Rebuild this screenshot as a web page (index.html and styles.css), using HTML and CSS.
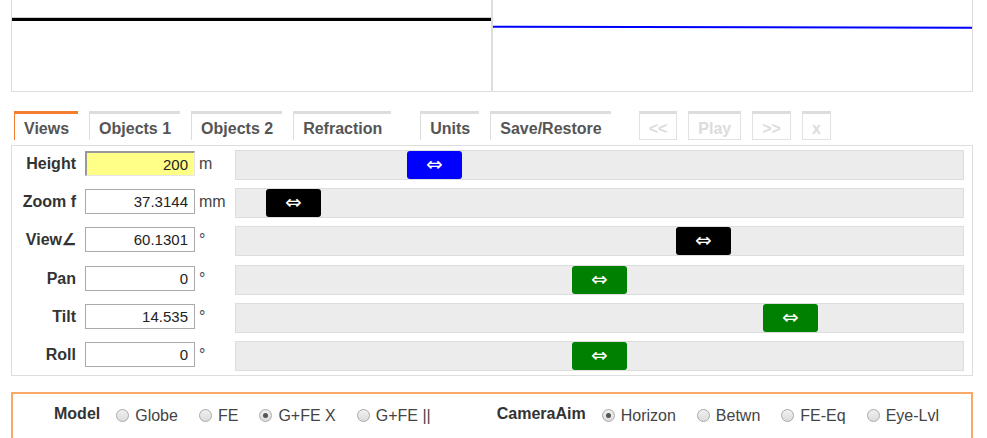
FILE: index.html
```
<!DOCTYPE html>
<html>
	<head>
		<meta charset="utf-8" />
		<title>Globe Views</title>
		<link rel="stylesheet" href="styles.css">
	</head>
	<body>
		<div class="page">
			<div class="graphs">
				<div class="graph graph-left">
					<svg width="479" height="90" viewBox="0 0 479 90">
						<line x1="0" y1="17.5" x2="479" y2="17.5" stroke="#cccccc" stroke-width="1"/>
						<line x1="0" y1="19.5" x2="479" y2="19.5" stroke="#000000" stroke-width="3"/>
					</svg>
				</div>
				<div class="graph graph-right">
					<svg width="480" height="90" viewBox="0 0 480 90">
						<line x1="0" y1="26.8" x2="480" y2="27.8" stroke="#0000ff" stroke-width="2"/>
					</svg>
				</div>
			</div>

			<div class="tabbar">
				<span class="tab on">Views</span>
				<span class="tab">Objects 1</span>
				<span class="tab">Objects 2</span>
				<span class="tab">Refraction</span>
				<span class="tab tab-far">Units</span>
				<span class="tab">Save/Restore</span>
				<span class="btn btn-first">&lt;&lt;</span>
				<span class="btn">Play</span>
				<span class="btn">&gt;&gt;</span>
				<span class="btn">x</span>
			</div>

			<div class="panel">
				<div class="row">
					<label class="name">Height</label>
					<input class="num num-hi" type="text" value="200">
					<span class="unit">m</span>
					<div class="track"><span class="thumb blue" style="left:171px;">&#8660;</span></div>
				</div>
				<div class="row">
					<label class="name">Zoom f</label>
					<input class="num" type="text" value="37.3144">
					<span class="unit">mm</span>
					<div class="track"><span class="thumb black" style="left:30px;">&#8660;</span></div>
				</div>
				<div class="row">
					<label class="name">View&#8736;</label>
					<input class="num" type="text" value="60.1301">
					<span class="unit">&deg;</span>
					<div class="track"><span class="thumb black" style="left:440px;">&#8660;</span></div>
				</div>
				<div class="row">
					<label class="name">Pan</label>
					<input class="num" type="text" value="0">
					<span class="unit">&deg;</span>
					<div class="track"><span class="thumb green" style="left:336px;">&#8660;</span></div>
				</div>
				<div class="row">
					<label class="name">Tilt</label>
					<input class="num" type="text" value="14.535">
					<span class="unit">&deg;</span>
					<div class="track"><span class="thumb green" style="left:527px;">&#8660;</span></div>
				</div>
				<div class="row">
					<label class="name">Roll</label>
					<input class="num" type="text" value="0">
					<span class="unit">&deg;</span>
					<div class="track"><span class="thumb green" style="left:336px;">&#8660;</span></div>
				</div>
			</div>

			<div class="options">
				<div class="group">
					<span class="group-name">Model</span>
					<label class="opt"><input type="radio" name="model">Globe</label>
					<label class="opt"><input type="radio" name="model">FE</label>
					<label class="opt"><input type="radio" name="model" checked>G+FE X</label>
					<label class="opt"><input type="radio" name="model">G+FE ||</label>
				</div>
				<div class="group">
					<span class="group-name">CameraAim</span>
					<label class="opt"><input type="radio" name="aim" checked>Horizon</label>
					<label class="opt"><input type="radio" name="aim">Betwn</label>
					<label class="opt"><input type="radio" name="aim">FE-Eq</label>
					<label class="opt"><input type="radio" name="aim">Eye-Lvl</label>
				</div>
			</div>
		</div>
	</body>
</html>
```
FILE: styles.css
```
*{
	margin:0;
	padding:0;
	box-sizing:border-box;
}
body{
	font-family:"Liberation Sans", Arial, sans-serif;
	font-size:16px;
	color:#333;
	background:#fff;
}
.page{
	width:962px;
	margin-left:11px;
}

/* graphs */
.graphs{
	display:flex;
	height:92px;
}
.graph{
	border:1px solid #ddd;
	border-top:none;
	height:92px;
	overflow:hidden;
}
.graph svg{
	display:block;
}
.graph-left{
	width:481px;
}
.graph-right{
	width:481px;
}

/* tabs */
.tabbar{
	display:flex;
	align-items:flex-start;
	margin-top:19px;
	margin-left:3px;
	height:34px;
}
.tab{
	display:block;
	border-top:3px solid #ddd;
	border-left:1px solid #ddd;
	padding:6px 9px 2px 9px;
	line-height:18px;
	font-weight:bold;
	color:#555;
	margin-right:11px;
	white-space:nowrap;
}
.tab.on{
	border-top-color:#f47d30;
	border-left-color:#f47d30;
}
.tab-far{
	margin-left:18px;
}
.btn{
	display:block;
	border:1px solid #e2e2e2;
	border-top:3px solid #ddd;
	padding:6px 9px 1px 9px;
	line-height:18px;
	font-weight:bold;
	color:#dcdcdc;
	margin-right:11px;
	white-space:nowrap;
}
.btn-first{
	margin-left:17px;
}

/* sliders */
.panel{
	border:1px solid #ddd;
	padding:4px 8px 4px 0;
	display:flex;
	flex-direction:column;
	gap:8.2px;
}
.row{
	display:flex;
	align-items:flex-start;
	height:30px;
}
.name{
	width:64px;
	margin-right:9px;
	text-align:right;
	font-weight:bold;
	line-height:27px;
	color:#333;
	white-space:nowrap;
}
.num{
	width:110px;
	height:25px;
	margin-top:1px;
	border:1px solid #aaa;
	padding:0 6px 0 2px;
	text-align:right;
	font-family:"Liberation Sans", Arial, sans-serif;
	font-size:15px;
	color:#222;
	background:#fff;
	outline:none;
}
.num-hi{
	background:#ffff88;
	border-width:2px 1px 1px 2px;
	border-color:#999 #e6e6e6 #e6e6e6 #999;
}
.unit{
	width:36px;
	margin-left:4px;
	line-height:27px;
	color:#444;
}
.track{
	flex:1;
	position:relative;
	height:30px;
	border:1px solid #ddd;
	background:#ececec;
}
.thumb{
	position:absolute;
	top:0;
	width:55px;
	height:28px;
	border-radius:3px;
	color:#fff;
	text-align:center;
	line-height:27px;
	font-size:20px;
	font-family:"DejaVu Sans", sans-serif;
}
.blue{
	background:#0000ff;
}
.black{
	background:#000;
}
.green{
	background:#008000;
}

/* options */
.options{
	margin-top:16px;
	border:2px solid #f9a866;
	padding:12px 0 28px 41px;
	display:flex;
	gap:66px;
	height:60px;
}
.group{
	display:flex;
	align-items:center;
	height:20px;
	gap:21px;
}
.group-name{
	font-weight:bold;
	color:#333;
	margin-bottom:4px;
	margin-right:-5px;
	line-height:20px;
}
.opt{
	display:flex;
	align-items:center;
	line-height:20px;
	color:#444;
	white-space:nowrap;
}
.opt input{
	appearance:none;
	-webkit-appearance:none;
	width:13px;
	height:13px;
	margin:0 6px 0 0;
	border:1px solid #a9a9a9;
	border-radius:50%;
	background:linear-gradient(#f0f0f0, #dcdcdc);
	position:relative;
}
.opt input:checked::after{
	content:"";
	position:absolute;
	left:3px;
	top:3px;
	width:5px;
	height:5px;
	border-radius:50%;
	background:#555;
}
```
